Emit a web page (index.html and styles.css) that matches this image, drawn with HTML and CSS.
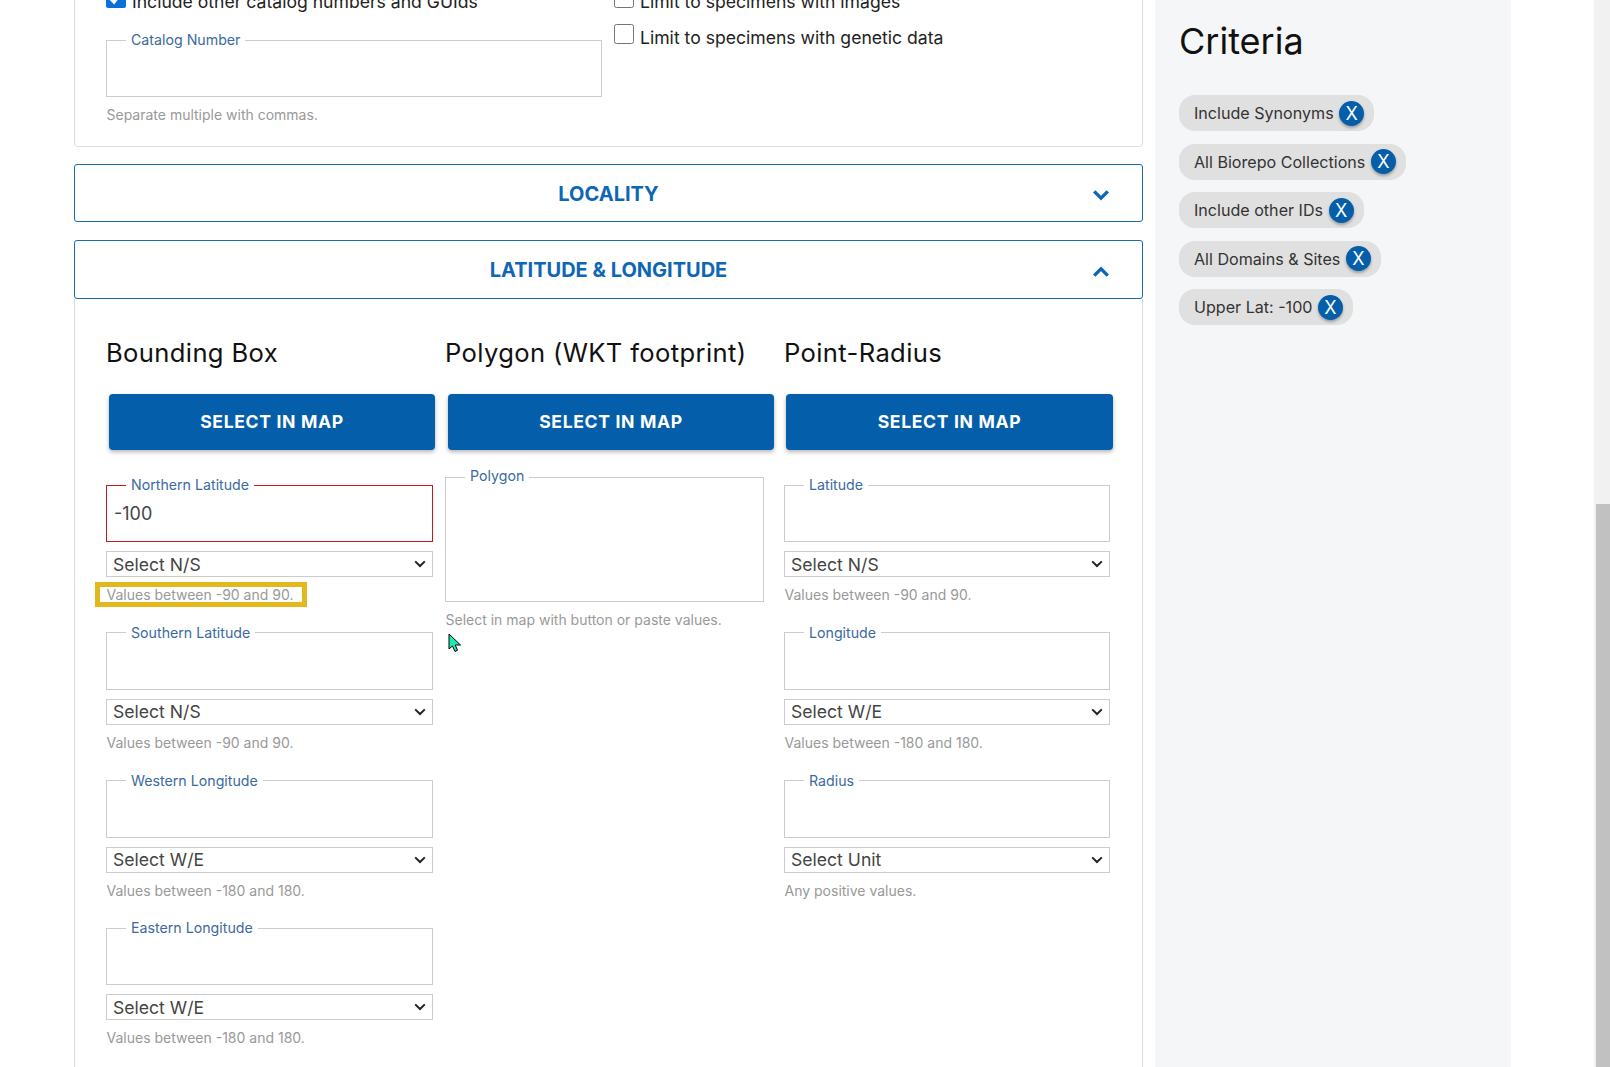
FILE: index.html
```html
<!DOCTYPE html>
<html lang="en">
<head>
    <meta charset="UTF-8">
    <title>Specimen Search</title>
    <link rel="stylesheet" href="styles.css">
</head>
<body>
    <main class="main">
        <section class="card top-card">
            <div class="top-left">
                <label class="check-row">
                    <input type="checkbox" checked>
                    <span>Include other catalog numbers and GUIds</span>
                </label>
                <fieldset class="field">
                    <legend>Catalog Number</legend>
                    <input type="text">
                </fieldset>
                <p class="help">Separate multiple with commas.</p>
            </div>
            <div class="top-right">
                <label class="check-row">
                    <input type="checkbox">
                    <span>Limit to specimens with images</span>
                </label>
                <label class="check-row">
                    <input type="checkbox">
                    <span>Limit to specimens with genetic data</span>
                </label>
            </div>
        </section>

        <button class="accordion" type="button">
            <span class="accordion-title">LOCALITY</span>
            <svg class="chevron" width="18" height="12" viewBox="0 0 18 12"><polyline points="2.2,2.4 9,9.2 15.8,2.4"/></svg>
        </button>

        <button class="accordion accordion-open" type="button">
            <span class="accordion-title">LATITUDE &amp; LONGITUDE</span>
            <svg class="chevron" width="18" height="12" viewBox="0 0 18 12"><polyline points="2.2,9.6 9,2.8 15.8,9.6"/></svg>
        </button>

        <section class="card geo-card">
            <div class="geo-col">
                <h2>Bounding Box</h2>
                <button class="map-btn" type="button">SELECT IN MAP</button>

                <div class="field-group">
                    <fieldset class="field field-error">
                        <legend>Northern Latitude</legend>
                        <input type="text" value="-100">
                    </fieldset>
                    <select><option>Select N/S</option></select>
                    <p class="help"><span class="marked">Values between -90 and 90.</span></p>
                </div>
                <div class="field-group">
                    <fieldset class="field">
                        <legend>Southern Latitude</legend>
                        <input type="text">
                    </fieldset>
                    <select><option>Select N/S</option></select>
                    <p class="help">Values between -90 and 90.</p>
                </div>
                <div class="field-group">
                    <fieldset class="field">
                        <legend>Western Longitude</legend>
                        <input type="text">
                    </fieldset>
                    <select><option>Select W/E</option></select>
                    <p class="help">Values between -180 and 180.</p>
                </div>
                <div class="field-group">
                    <fieldset class="field">
                        <legend>Eastern Longitude</legend>
                        <input type="text">
                    </fieldset>
                    <select><option>Select W/E</option></select>
                    <p class="help">Values between -180 and 180.</p>
                </div>
            </div>

            <div class="geo-col">
                <h2>Polygon (WKT footprint)</h2>
                <button class="map-btn" type="button">SELECT IN MAP</button>

                <div class="polygon-group">
                    <fieldset class="field polygon-field">
                        <legend>Polygon</legend>
                        <textarea></textarea>
                    </fieldset>
                    <p class="help">Select in map with button or paste values.</p>
                    <svg class="cursor" width="15" height="20" viewBox="0 0 15 20"><path d="M1 1 L1 16 L4.5 13 L7 18.5 L9.5 17.2 L7.2 12 L12.5 12 Z"/></svg>
                </div>
            </div>

            <div class="geo-col">
                <h2>Point-Radius</h2>
                <button class="map-btn" type="button">SELECT IN MAP</button>

                <div class="field-group">
                    <fieldset class="field">
                        <legend>Latitude</legend>
                        <input type="text">
                    </fieldset>
                    <select><option>Select N/S</option></select>
                    <p class="help">Values between -90 and 90.</p>
                </div>
                <div class="field-group">
                    <fieldset class="field">
                        <legend>Longitude</legend>
                        <input type="text">
                    </fieldset>
                    <select><option>Select W/E</option></select>
                    <p class="help">Values between -180 and 180.</p>
                </div>
                <div class="field-group">
                    <fieldset class="field">
                        <legend>Radius</legend>
                        <input type="text">
                    </fieldset>
                    <select><option>Select Unit</option></select>
                    <p class="help">Any positive values.</p>
                </div>
            </div>
        </section>
    </main>

    <aside class="sidebar">
        <h1>Criteria</h1>
        <div class="chips">
            <div class="chip"><span>Include Synonyms</span><span class="chip-x">X</span></div>
            <div class="chip"><span>All Biorepo Collections</span><span class="chip-x">X</span></div>
            <div class="chip"><span>Include other IDs</span><span class="chip-x">X</span></div>
            <div class="chip"><span>All Domains &amp; Sites</span><span class="chip-x">X</span></div>
            <div class="chip"><span>Upper Lat: -100</span><span class="chip-x">X</span></div>
        </div>
    </aside>

    <div class="gutter"></div>
    <div class="scrollbar"><div class="scroll-thumb"></div></div>
</body>
</html>
```

FILE: styles.css
```css
* {
    box-sizing: border-box;
}

html,
body {
    height: 100%;
}

body {
    margin: 0;
    display: flex;
    overflow: hidden;
    background: #fff;
    color: #222;
    font-family: Inter, "Noto Sans", sans-serif;
    font-size: 17.6px;
}

.main {
    width: 1155px;
    flex-shrink: 0;
    padding: 0 12px 0 74px;
}

.card {
    background: #fff;
    border: 1px solid #ddd;
}

.top-card {
    display: grid;
    grid-template-columns: 508px 1fr;
    height: 186.5px;
    margin-top: -40px;
    margin-bottom: 17px;
    padding: 28px 0 0 31px;
    border-radius: 0 0 4px 4px;
}

.top-left .field {
    width: 496px;
}

.top-left .help {
    margin-top: 8px;
}

.top-left .check-row {
    margin-bottom: 15px;
}

.top-right .check-row {
    margin-bottom: 10px;
}

.check-row {
    display: flex;
    height: 26px;
    align-items: center;
    line-height: 26px;
    color: #222;
}

.check-row input {
    width: 20px;
    height: 20px;
    margin: -8px 6px 0 0;
    flex-shrink: 0;
    accent-color: #0b6fd9;
}

.accordion {
    display: grid;
    grid-template-columns: 1fr auto 1fr;
    align-items: center;
    width: 100%;
    height: 58.5px;
    margin: 0 0 18px;
    padding: 0 32px;
    background: #fff;
    border: 1px solid #1a6bb0;
    border-radius: 3px;
    font-family: inherit;
}

.accordion-title {
    grid-column: 2;
    padding-top: 2px;
    font-size: 20px;
    font-weight: 700;
    color: #0e66b5;
}

.chevron {
    grid-column: 3;
    justify-self: end;
    margin-top: 5px;
    fill: none;
    stroke: #0e66b5;
    stroke-width: 3.4;
}

.accordion-open {
    margin-bottom: 0;
}

.geo-card {
    display: grid;
    grid-template-columns: repeat(3, 339px);
    height: 800px;
    padding: 38px 0 0 31px;
    border-top: none;
}

h2 {
    margin: 0 0 25px;
    font-size: 25.6px;
    font-weight: 400;
    line-height: 32px;
    letter-spacing: 0.36px;
    color: #111;
}

.map-btn {
    display: block;
    width: 326px;
    height: 56px;
    margin: 0 0 25.5px 3px;
    background: #045ea9;
    border: none;
    border-radius: 4px;
    box-shadow: 0 2px 4px rgba(0, 0, 0, 0.3);
    color: #fff;
    font-family: inherit;
    font-size: 17.6px;
    font-weight: 700;
    letter-spacing: 0.65px;
}

.geo-col:last-child .map-btn {
    width: 327px;
    margin-left: 2px;
}

.geo-col:last-child .field-group {
    width: 326px;
}

.field-group {
    width: 327px;
    margin-bottom: 17.8px;
}

.field {
    margin: 0;
    padding: 0 0 10px;
    min-width: 0;
    border: 1px solid #ccc;
}

.field legend {
    margin-left: 19px;
    padding: 0 5px;
    font-size: 14.2px;
    line-height: 20px;
    color: #3a6a9f;
}

.field input {
    display: block;
    width: 100%;
    height: 36px;
    padding: 0 7px;
    border: none;
    outline: none;
    background: transparent;
    color: #444;
    font-family: inherit;
    font-size: 18px;
}

.field-error {
    border-color: #c8161d;
}

select {
    display: block;
    width: 100%;
    height: 26px;
    margin-top: 9px;
    padding: 0 24px 0 6px;
    appearance: none;
    background: #fff url("data:image/svg+xml,%3Csvg xmlns='http://www.w3.org/2000/svg' width='12' height='8' viewBox='0 0 12 8'%3E%3Cpolyline points='1.2,1.4 6,6 10.8,1.4' fill='none' stroke='%23222' stroke-width='2'/%3E%3C/svg%3E") no-repeat right 6px center;
    border: 1px solid #ccc;
    border-radius: 0;
    color: #444;
    font-family: inherit;
    font-size: 17.6px;
}

.help {
    margin: 8px 0 0;
    padding-left: 0.5px;
    font-size: 14px;
    line-height: 20px;
    color: #999;
}

.marked {
    position: relative;
    display: inline-block;
}

.marked::after {
    content: "";
    position: absolute;
    inset: -3px -14px -2px -12px;
    border: 5px solid #e3b81d;
}

.polygon-group {
    position: relative;
    width: 319px;
    margin-top: -9.2px;
}

.polygon-field {
    padding: 0;
}

.polygon-field legend {
    padding-bottom: 4px;
}

.polygon-field textarea {
    display: block;
    width: 100%;
    height: 111px;
    padding: 4px 8px;
    border: none;
    outline: none;
    resize: none;
}

.cursor {
    position: absolute;
    top: 167px;
    left: 3px;
    fill: #1de9b6;
    stroke: #000;
    stroke-width: 1;
}

.sidebar {
    width: 356px;
    flex-shrink: 0;
    padding: 19px 0 0 24px;
    background: #f5f6f8;
}

h1 {
    margin: 0 0 32px;
    font-size: 36px;
    font-weight: 400;
    line-height: 44px;
    color: #111;
}

.chips {
    display: flex;
    flex-direction: column;
    align-items: flex-start;
    gap: 12.5px;
}

.chip {
    display: flex;
    align-items: center;
    gap: 5.5px;
    height: 36px;
    padding: 0 10px 0 15px;
    background: #e0e0e0;
    border-radius: 16px;
    color: #333;
    font-size: 16.1px;
}

.chip-x {
    display: flex;
    width: 25px;
    height: 25px;
    align-items: center;
    justify-content: center;
    background: #045ea9;
    border-radius: 50%;
    box-shadow: 0 2px 3px rgba(0, 0, 0, 0.3);
    color: #fff;
    font-size: 18px;
}

.gutter {
    flex: 1;
}

.scrollbar {
    width: 16px;
    flex-shrink: 0;
    padding: 504px 0 0 2px;
    background: #f1f1f1;
}

.scroll-thumb {
    height: 100%;
    background: #c1c1c1;
}
```
